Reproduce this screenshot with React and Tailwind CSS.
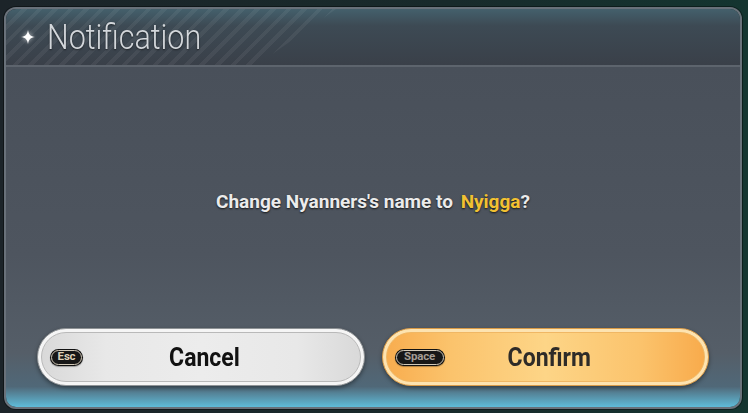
import React from 'react';

const Badge = ({ label, wide, dim }) => (
  <div className="rounded-full bg-[#121212] p-[1px] shadow-[0_1px_1px_rgba(0,0,0,0.3)]">
    <div
      className={`flex h-[15px] items-center justify-center rounded-full border border-[#d2c9b8] bg-[#171717] font-['Roboto',sans-serif] text-[11.5px] font-bold leading-none tracking-[-0.2px] ${
        wide ? 'w-[48px]' : 'w-[31px]'
      } ${dim ? 'text-[#a49d94]' : 'text-[#dccfb6]'}`}
    >
      {label}
    </div>
  </div>
);

const Sparkle = () => (
  <svg width="14" height="14" viewBox="0 0 12 12" className="drop-shadow-[0_0_2px_rgba(255,255,255,0.6)]">
    <path
      d="M6 0C6.7 4 8 5.3 12 6C8 6.7 6.7 8 6 12C5.3 8 4 6.7 0 6C4 5.3 5.3 4 6 0Z"
      fill="#ffffff"
    />
  </svg>
);

const App = () => {
  return (
    <div className="h-[413px] w-[748px] overflow-hidden bg-[linear-gradient(90deg,#1c2429_0%,#182a2b_60%,#143530_100%)] pb-[4px] pl-[4px] pr-[6px] pt-[7px]">
      {/* Dialog panel */}
      <div className="flex h-full flex-col overflow-hidden rounded-[12px] border-2 border-[#69717a] shadow-[0_0_0_1px_rgba(0,0,0,0.4)]">
        {/* Header */}
        <header className="flex h-[58px] shrink-0 border-b-2 border-[#5d646d] bg-[linear-gradient(180deg,#44606c_0%,#3d4a54_30%,#3a4049_100%)]">
          <div className="flex w-[330px] items-center gap-[12px] bg-[repeating-linear-gradient(135deg,rgba(255,255,255,0.055)_0px,rgba(255,255,255,0.055)_4px,transparent_4px,transparent_11px)] pl-[15px] [clip-path:polygon(0_0,100%_0,76%_100%,0_100%)]">
            <Sparkle />
            <h1 className="origin-left scale-x-[0.87] whitespace-nowrap font-['Roboto',sans-serif] text-[35px] font-light leading-none text-[#d3d7db] [text-shadow:0_1px_2px_rgba(0,0,0,0.55)]">
              Notification
            </h1>
          </div>
        </header>

        {/* Body */}
        <main className="flex flex-1 flex-col bg-[linear-gradient(180deg,#49505a_0%,#4e555f_55%,#555e68_84%,#506878_94%,#5fbcd9_100%)]">
          <p className="mt-[123px] text-center font-['Roboto',sans-serif] text-[19px] font-bold leading-[24px] text-[#ebebeb] [text-shadow:0_1px_2px_rgba(0,0,0,0.75)]">
            Change Nyanners's name to <span className="ml-[3px] text-[#f2c132]">Nyigga</span>?
          </p>

          <div className="mb-[21px] mt-auto flex gap-[17px] pl-[31px] pr-[31px]">
            {/* Cancel */}
            <button className="h-[58px] flex-1 rounded-full border border-[#8e9295] bg-[#f5f5f5] p-[3px] shadow-[0_2px_4px_rgba(0,0,0,0.4)]">
              <div className="grid h-full grid-cols-[1fr_auto_1fr] items-center rounded-full border border-[#b9b9b9] bg-[linear-gradient(90deg,#d9d9d9_0%,#e8e8e8_20%,#ececec_50%,#e8e8e8_80%,#d9d9d9_100%)] pl-[8px]">
                <div className="justify-self-start">
                  <Badge label="Esc" />
                </div>
                <span className="origin-center scale-x-[0.92] font-['Roboto',sans-serif] text-[25px] font-bold leading-none text-[#111111]">
                  Cancel
                </span>
                <div />
              </div>
            </button>

            {/* Confirm */}
            <button className="h-[58px] flex-1 rounded-full border border-[#d99a46] bg-[#fde3b0] p-[3px] shadow-[0_2px_4px_rgba(0,0,0,0.4)]">
              <div className="grid h-full grid-cols-[1fr_auto_1fr] items-center rounded-full border border-[#f0b764] bg-[linear-gradient(90deg,#f8ad4f_0%,#fbc36c_20%,#fdd587_50%,#fbc36c_80%,#f8ab4c_100%)] pl-[8px]">
                <div className="justify-self-start">
                  <Badge label="Space" wide dim />
                </div>
                <span className="origin-center scale-x-[0.92] font-['Roboto',sans-serif] text-[25px] font-bold leading-none text-[#2e2b28]">
                  Confirm
                </span>
                <div />
              </div>
            </button>
          </div>
        </main>
      </div>
    </div>
  );
};

export default App;
